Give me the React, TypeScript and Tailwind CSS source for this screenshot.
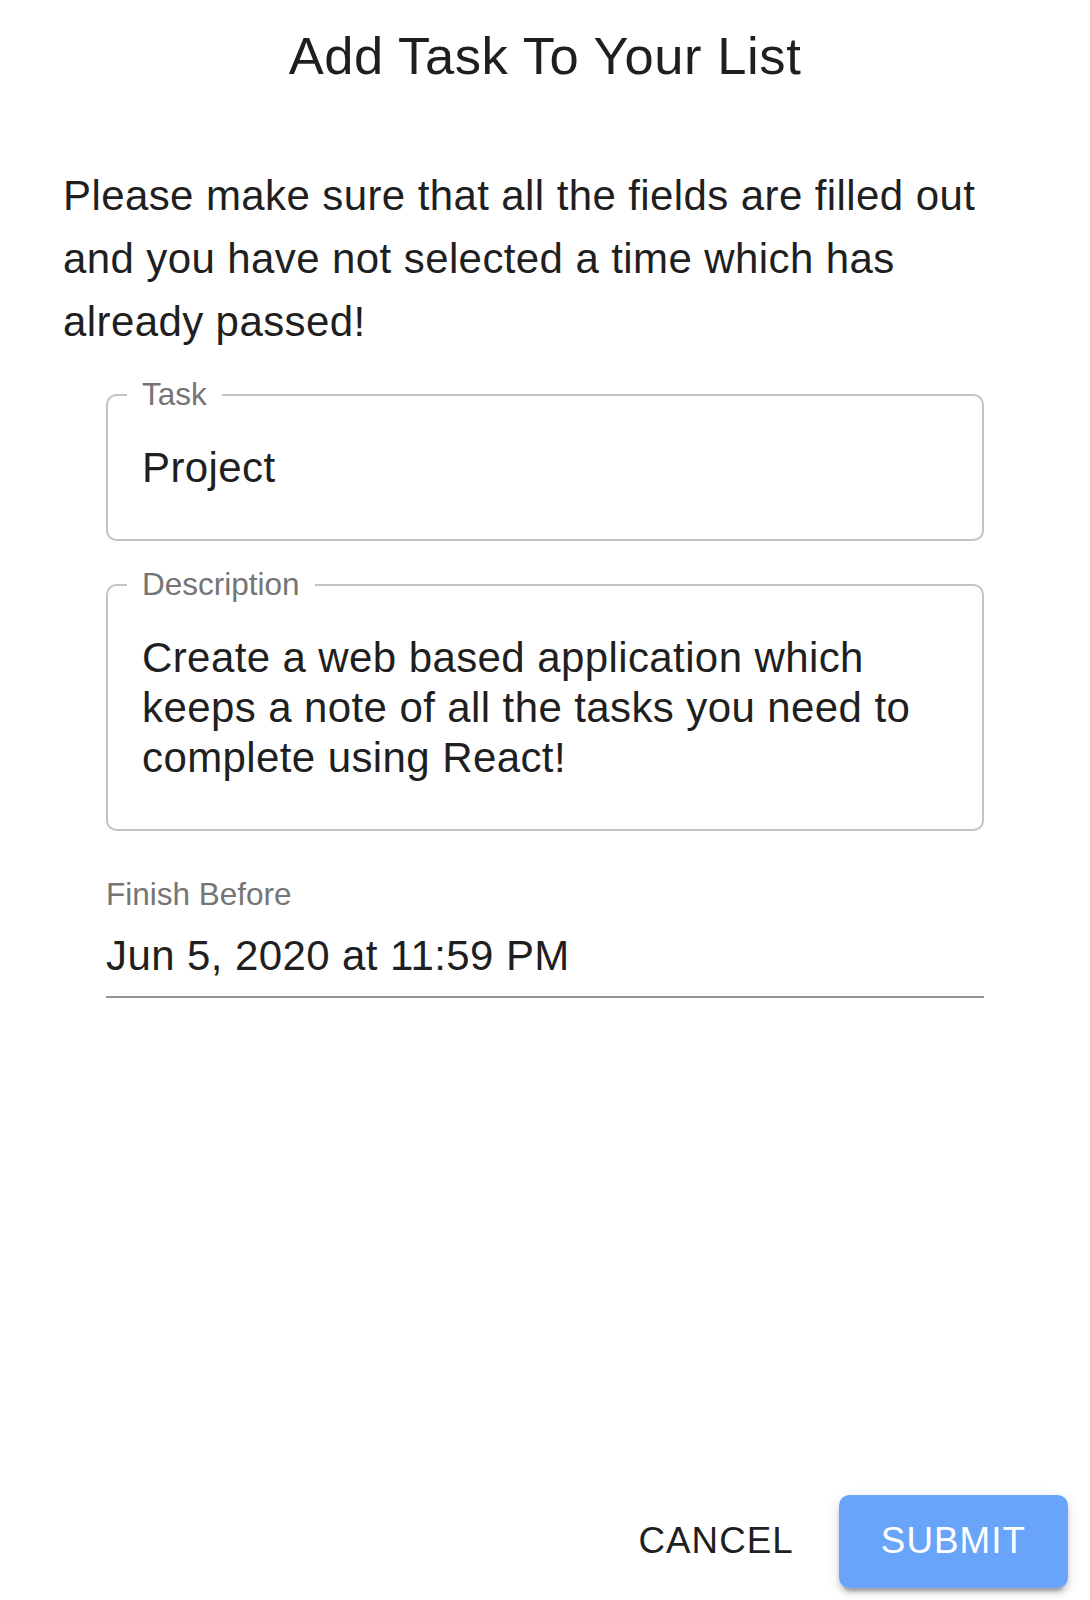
import React from 'react'

const font = { fontFamily: '"Liberation Sans", Arial, Helvetica, sans-serif' }

interface OutlinedFieldProps {
  label: string
  children: React.ReactNode
}

function OutlinedField({ label, children }: OutlinedFieldProps) {
  return (
    <div className="relative rounded-[10.5px] border-[2.6px] border-[#c4c4c4] px-[34px] pt-[47px] pb-[46px]">
      <span className="absolute -top-[17px] left-[19px] bg-white px-[15px] text-[31.5px] leading-[31.5px] text-[#757575]">
        {label}
      </span>
      <div className="text-[42px] leading-[50px] tracking-[0.4px] text-[#1f1f1f]">{children}</div>
    </div>
  )
}

export default function App() {
  return (
    <div className="flex h-[1600px] w-full flex-col overflow-hidden bg-white" style={font}>
      <h2 className="mt-[14px] text-center text-[52.5px] leading-[84px] tracking-[0.6px] text-[#1f1f1f]">
        Add Task To Your List
      </h2>

      <div className="px-[63px]">
        <p className="mt-[66px] text-[42px] leading-[63px] tracking-[0.4px] text-[#1f1f1f]">
          Please make sure that all the fields are filled out and you have not selected a time which has already
          passed!
        </p>

        <div className="mx-[43px] mt-[41px] flex flex-col">
          <OutlinedField label="Task">Project</OutlinedField>

          <div className="mt-[43px]">
            <OutlinedField label="Description">
              Create a web based application which keeps a note of all the tasks you need to complete using React!
            </OutlinedField>
          </div>

          <div className="mt-[44px] flex flex-col">
            <label className="mt-[4px] text-[31.5px] leading-[31.5px] text-[#757575]">Finish Before</label>
            <div className="mt-[4.5px] border-b-[2.6px] border-[#949494] pt-[15.75px] pb-[15px] text-[42px] leading-[50px] tracking-[0.4px] text-[#1f1f1f]">
              Jun 5, 2020 at 11:59 PM
            </div>
          </div>
        </div>
      </div>

      <div className="mt-auto flex items-center justify-end gap-[24px] pr-[22px] pb-[12px]">
        <button className="rounded-[10.5px] px-[21px] py-[15.75px] text-[36.75px] leading-[62px] tracking-[1.05px] text-[#1f1f1f] uppercase">
          Cancel
        </button>
        <button className="rounded-[10.5px] bg-[#68a5fa] px-[42px] py-[15.75px] text-[36.75px] leading-[62px] tracking-[1.05px] text-white uppercase shadow-[0_8px_3px_-5px_rgba(0,0,0,0.2),0_5px_5px_0_rgba(0,0,0,0.14),0_3px_13px_0_rgba(0,0,0,0.12)]">
          Submit
        </button>
      </div>
    </div>
  )
}
